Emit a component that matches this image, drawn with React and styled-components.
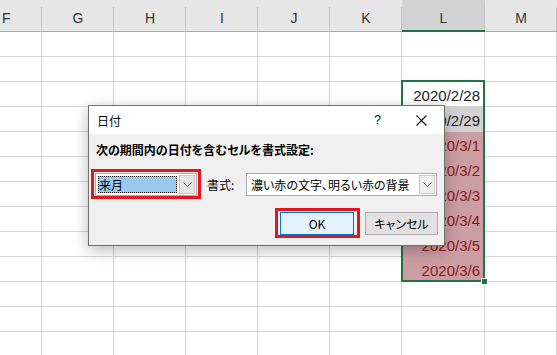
import styled, { createGlobalStyle } from "styled-components";

const GlobalStyle = createGlobalStyle`
  html, body {
    margin: 0;
    padding: 0;
    background: #fff;
    overflow: hidden;
  }
  * { box-sizing: border-box; }
`;

const columns = ["F", "G", "H", "I", "J", "K", "L", "M"];

const dates = {
  2: { text: "2020/2/28" },
  3: { text: "2020/2/29", fill: "#d3d3d3" },
  4: { text: "2020/3/1", fill: "#cb9ea3", red: true },
  5: { text: "2020/3/2", fill: "#cb9ea3", red: true },
  6: { text: "2020/3/3", fill: "#cb9ea3", red: true },
  7: { text: "2020/3/4", fill: "#cb9ea3", red: true },
  8: { text: "2020/3/5", fill: "#cb9ea3", red: true },
  9: { text: "2020/3/6", fill: "#cb9ea3", red: true },
};

const Chevron = () => (
  <svg width="9" height="5" viewBox="0 0 9 5">
    <polyline points="0.5,0.5 4.5,4.5 8.5,0.5" fill="none" stroke="#555" strokeWidth="1" />
  </svg>
);

export default function App() {
  const rows = Array.from({ length: 13 }, (_, i) => i);
  return (
    <Sheet>
      <GlobalStyle />
      <Grid>
        {columns.map((c) => (
          <HeadCell key={c} $active={c === "L"}>{c}</HeadCell>
        ))}
        {rows.map((r) =>
          columns.map((c) => {
            const d = c === "L" ? dates[r] : null;
            return (
              <Cell key={c + r} $fill={d && d.fill} $red={d && d.red}>
                {d ? d.text : ""}
              </Cell>
            );
          })
        )}
      </Grid>

      <Selection>
        <Handle />
      </Selection>

      <Dialog>
        <TitleBar>
          <Title>日付</Title>
          <Help>?</Help>
          <Close>
            <svg width="11" height="11" viewBox="0 0 11 11">
              <path d="M0.5 0.5 L10.5 10.5 M10.5 0.5 L0.5 10.5" stroke="#111" strokeWidth="1.1" />
            </svg>
          </Close>
        </TitleBar>
        <Body>
          <Prompt>次の期間内の日付を含むセルを書式設定:</Prompt>
          <FieldRow>
            <Highlight>
              <Combo $width={102}>
                <Selected>来月</Selected>
                <DropButton $dark><Chevron /></DropButton>
              </Combo>
            </Highlight>
            <FieldLabel>書式:</FieldLabel>
            <Combo $width={191}>
              <ComboText>濃い赤の文字、明るい赤の背景</ComboText>
              <DropButton><Chevron /></DropButton>
            </Combo>
          </FieldRow>
          <ButtonRow>
            <Highlight $pad="1px 3px 1px 2px">
              <Button $primary>OK</Button>
            </Highlight>
            <Button>キャンセル</Button>
          </ButtonRow>
        </Body>
      </Dialog>
    </Sheet>
  );
}

const Sheet = styled.div`
  position: relative;
  width: 557px;
  height: 355px;
  overflow: hidden;
  font-family: "Liberation Sans", Arial, sans-serif;
`;

const Grid = styled.div`
  display: grid;
  grid-template-columns: 42px repeat(5, 72px) 83px 1fr;
  grid-template-rows: 32px;
  grid-auto-rows: 25px;
`;

const HeadCell = styled.div`
  position: relative;
  display: flex;
  align-items: center;
  justify-content: center;
  padding-top: 5px;
  background: ${(p) => (p.$active ? "#d2d2d2" : "#e6e6e6")};
  border-bottom: ${(p) => (p.$active ? "2px solid #217346" : "1px solid #ababab")};
  color: #333;
  font-size: 14px;
  &:first-child { justify-content: flex-start; padding-left: 2px; }
  &::after {
    content: "";
    position: absolute;
    right: 0;
    top: 7px;
    bottom: 0;
    width: 1px;
    background: #c4c4c4;
  }
`;

const Cell = styled.div`
  display: flex;
  align-items: flex-end;
  justify-content: flex-end;
  padding: 0 4px 2px 0;
  border-right: 1px solid #d4d4d4;
  border-bottom: 1px solid ${(p) => p.$fill || "#d4d4d4"};
  background: ${(p) => p.$fill || "#fff"};
  color: ${(p) => (p.$red ? "#8e1820" : "#222")};
  font-size: 15px;
`;

const Selection = styled.div`
  position: absolute;
  left: 401px;
  top: 80px;
  width: 84px;
  height: 202px;
  border: 2px solid #217346;
  pointer-events: none;
`;

const Handle = styled.div`
  position: absolute;
  right: -5px;
  bottom: -5px;
  width: 7px;
  height: 7px;
  background: #217346;
  border: 1px solid #fff;
`;

const Dialog = styled.div`
  position: absolute;
  left: 88px;
  top: 105px;
  width: 357px;
  height: 141px;
  display: flex;
  flex-direction: column;
  border: 1px solid #707070;
  background: #f0f0f0;
  box-shadow: 0 4px 14px rgba(0, 0, 0, 0.28);
  font-family: "Noto Sans CJK JP", sans-serif;
  font-feature-settings: "palt";
  color: #000;
`;

const TitleBar = styled.div`
  display: flex;
  align-items: center;
  height: 28px;
  background: #fff;
  padding-left: 8px;
`;

const Title = styled.span`
  flex: 1;
  font-size: 12px;
`;

const Help = styled.span`
  font-family: "Liberation Sans", sans-serif;
  font-size: 12px;
  margin-right: 35px;
`;

const Close = styled.span`
  display: flex;
  margin-right: 17px;
`;

const Body = styled.div`
  display: flex;
  flex-direction: column;
  padding: 8px 6px 6px 2px;
`;

const Prompt = styled.div`
  margin-left: 5px;
  font-size: 12px;
  font-weight: 700;
  line-height: 16px;
`;

const FieldRow = styled.div`
  display: flex;
  align-items: center;
  margin-top: 11px;
  height: 30px;
`;

const Highlight = styled.div`
  display: flex;
  align-items: center;
  justify-content: center;
  height: 30px;
  padding: ${(p) => p.$pad || "0 1px"};
  border: 3px solid #e8141c;
`;

const Combo = styled.div`
  display: flex;
  align-items: center;
  width: ${(p) => p.$width}px;
  height: 23px;
  padding: 1px 1px 1px 2px;
  background: #fff;
  border: 1px solid #adadad;
`;

const Selected = styled.div`
  flex: 1;
  height: 17px;
  margin-right: 2px;
  display: flex;
  align-items: center;
  background: #99c9ef;
  outline: 1px dotted #000;
  outline-offset: -1px;
  font-size: 12px;
  padding-left: 1px;
`;

const ComboText = styled.div`
  flex: 1;
  padding-left: 2px;
  font-size: 12px;
  white-space: nowrap;
  overflow: hidden;
`;

const DropButton = styled.div`
  width: 16px;
  height: 19px;
  display: flex;
  align-items: center;
  justify-content: center;
  background: ${(p) => (p.$dark ? "#e5e5e5" : "#f0f0f0")};
  border: 1px solid #c8c8c8;
`;

const FieldLabel = styled.span`
  width: 39px;
  margin-left: 6px;
  font-size: 12px;
`;

const ButtonRow = styled.div`
  display: flex;
  align-items: center;
  justify-content: flex-end;
  gap: 5px;
  margin-top: 9px;
`;

const Button = styled.div`
  width: ${(p) => (p.$primary ? 74 : 73)}px;
  height: 23px;
  display: flex;
  align-items: center;
  justify-content: center;
  background: ${(p) => (p.$primary ? "#e5f1fb" : "#e1e1e1")};
  border: 1px solid ${(p) => (p.$primary ? "#0078d7" : "#adadad")};
  font-size: 12px;
`;
